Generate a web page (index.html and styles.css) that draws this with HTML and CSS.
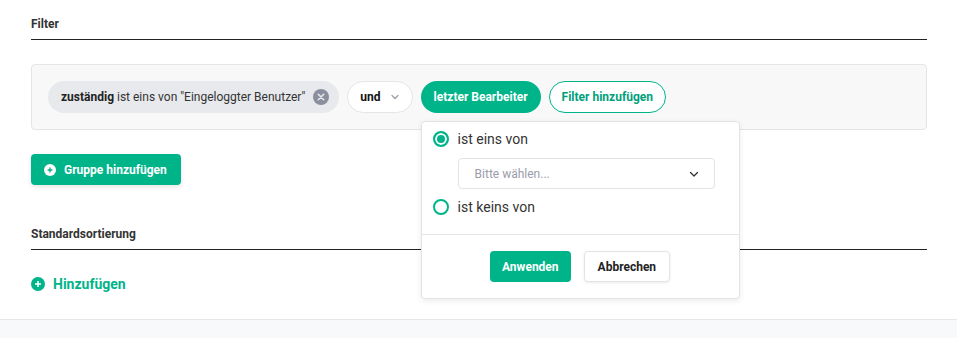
FILE: index.html
```html
<!DOCTYPE html>
<html>
<head>
    <title>Filter</title>
    <link rel="stylesheet" href="styles.css">
</head>
<body>
    <div class="page">
        <div class="section-title">Filter</div>

        <div class="filter-box">
            <div class="chip">
                <span><b>zuständig</b> ist eins von "Eingeloggter Benutzer"</span>
                <span class="chip-remove">
                    <svg width="16" height="16" viewBox="0 0 16 16"><circle cx="8" cy="8" r="8" fill="#8b8e9c"/><path d="M5.3 5.3l5.4 5.4M10.7 5.3l-5.4 5.4" stroke="#e8e9ed" stroke-width="1.6" stroke-linecap="round"/></svg>
                </span>
            </div>

            <div class="pill-select">
                und
                <svg width="10" height="10" viewBox="0 0 10 10"><path d="M2 3.5l3 3 3-3" fill="none" stroke="#9a9ca8" stroke-width="1.2" stroke-linecap="round" stroke-linejoin="round"/></svg>
            </div>

            <div class="popover-anchor">
                <div class="pill-green">letzter Bearbeiter</div>

                <!-- open dropdown for the active filter -->
                <div class="popover">
                    <div class="popover-body">
                        <label class="radio-row">
                            <span class="radio checked"></span>
                            ist eins von
                        </label>
                        <div class="select">
                            <span>Bitte wählen...</span>
                            <svg width="12" height="12" viewBox="0 0 12 12"><path d="M2.5 4.5l3.5 3.5 3.5-3.5" fill="none" stroke="#333" stroke-width="1.3" stroke-linecap="round" stroke-linejoin="round"/></svg>
                        </div>
                        <label class="radio-row">
                            <span class="radio"></span>
                            ist keins von
                        </label>
                    </div>
                    <div class="popover-footer">
                        <button class="btn btn-green btn-apply">Anwenden</button>
                        <button class="btn btn-white">Abbrechen</button>
                    </div>
                </div>
            </div>

            <div class="pill-outline">Filter hinzufügen</div>
        </div>

        <button class="btn btn-green btn-group">
            <svg width="12" height="12" viewBox="0 0 12 12"><circle cx="6" cy="6" r="6" fill="#fff"/><path d="M6 3.6v4.8M3.6 6h4.8" stroke="#00b48a" stroke-width="1.4"/></svg>
            Gruppe hinzufügen
        </button>

        <div class="section-title section-sort">Standardsortierung</div>

        <div class="add-link">
            <svg width="14" height="14" viewBox="0 0 14 14"><circle cx="7" cy="7" r="7" fill="#00b48a"/><path d="M7 4v6M4 7h6" stroke="#fff" stroke-width="1.6"/></svg>
            Hinzufügen
        </div>
    </div>

    <div class="footer"></div>
</body>
</html>
```

FILE: styles.css
```css
body {
    margin: 0;
    font-family: Roboto, "Liberation Sans", Arial, sans-serif;
    color: #2b2b2b;
    background: #fff;
}
.page {
    padding: 0 30px 25px 31px;
}
.section-title {
    padding: 16px 0 7px;
    font-size: 12px;
    line-height: 16px;
    font-weight: bold;
    color: #333;
    border-bottom: 1px solid #222;
}
.filter-box {
    margin-top: 24px;
    padding: 16px;
    background: #f8f8f8;
    border: 1px solid #e5e5e5;
    border-radius: 4px;
    display: flex;
    align-items: center;
    gap: 8px;
}
.chip {
    height: 32px;
    padding: 0 10px 0 13px;
    background: #e8e9ed;
    border-radius: 16px;
    display: flex;
    align-items: center;
    gap: 8px;
    font-size: 12px;
    color: #333;
    box-sizing: border-box;
}
.chip b {
    color: #222;
}
.chip-remove {
    display: flex;
}
.pill-select {
    height: 32px;
    box-sizing: border-box;
    padding: 0 12px;
    background: #fff;
    border: 1px solid #e6e6e6;
    border-radius: 16px;
    display: flex;
    align-items: center;
    gap: 9px;
    font-size: 12px;
    font-weight: bold;
    color: #111;
}
.popover-anchor {
    position: relative;
}
.pill-green {
    height: 32px;
    box-sizing: border-box;
    padding: 0 13px;
    background: #00b48a;
    color: #fff;
    border-radius: 16px;
    display: flex;
    align-items: center;
    font-size: 12px;
    font-weight: bold;
}
.pill-outline {
    height: 32px;
    box-sizing: border-box;
    padding: 0 12px;
    background: #fff;
    color: #00a07c;
    border: 1px solid #00b48a;
    border-radius: 16px;
    display: flex;
    align-items: center;
    font-size: 12px;
    font-weight: bold;
}
.popover {
    position: absolute;
    top: 40px;
    left: 0;
    width: 319px;
    background: #fff;
    border: 1px solid #e3e3e3;
    border-radius: 4px;
    box-shadow: 0 2px 6px rgba(0, 0, 0, 0.08);
    box-sizing: border-box;
    z-index: 2;
}
.popover-body {
    padding: 7px 24px 17px 11px;
}
.radio-row {
    display: flex;
    align-items: center;
    gap: 9px;
    font-size: 14px;
    line-height: 20px;
    color: #333;
}
.radio {
    width: 16px;
    height: 16px;
    box-sizing: border-box;
    border: 2px solid #00b48a;
    border-radius: 50%;
    background: #fff;
}
.radio.checked {
    background: #00b48a;
    box-shadow: inset 0 0 0 2px #fff;
}
.select {
    margin: 9px 0 8px 25px;
    height: 31px;
    box-sizing: border-box;
    border: 1px solid #e3e3e3;
    border-radius: 4px;
    padding: 0 14px 0 16px;
    display: flex;
    align-items: center;
    justify-content: space-between;
    font-size: 12px;
    color: #9a9cab;
}
.popover-footer {
    border-top: 1px solid #e6e6e6;
    padding: 16px;
    display: flex;
    justify-content: center;
    gap: 13px;
}
.btn {
    height: 31px;
    padding: 0 13px;
    border-radius: 4px;
    font-family: inherit;
    font-size: 12px;
    font-weight: bold;
    cursor: pointer;
}
.btn-apply {
    padding: 0 12px;
}
.btn-green {
    background: #00b48a;
    color: #fff;
    border: none;
}
.btn-white {
    background: #fff;
    color: #222;
    border: 1px solid #e3e3e3;
    box-shadow: 0 1px 3px rgba(0, 0, 0, 0.08);
}
.btn-group {
    margin-top: 24px;
    display: flex;
    align-items: center;
    gap: 8px;
    padding: 0 14px 0 13px;
    box-shadow: 0 2px 5px rgba(0, 0, 0, 0.1);
}
.section-sort {
    margin-top: 25px;
}
.add-link {
    margin-top: 24px;
    display: flex;
    align-items: center;
    gap: 8px;
    font-size: 14px;
    line-height: 20px;
    font-weight: bold;
    color: #00b48a;
}
.footer {
    height: 19px;
    background: #f8f9fa;
    border-top: 1px solid #e5e7eb;
}
```
